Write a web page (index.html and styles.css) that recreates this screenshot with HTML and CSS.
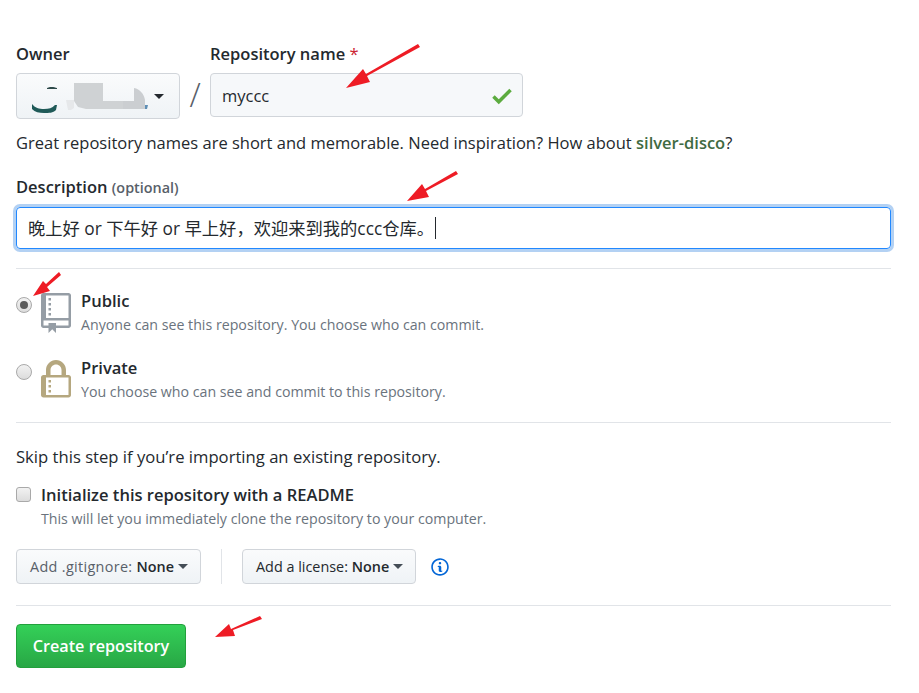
FILE: index.html
```html
<!DOCTYPE html>
<html lang="en">
<head>
<meta charset="utf-8">
<title>Create repository</title>
<link rel="stylesheet" href="styles.css">
</head>
<body>
<main class="page">
  <div class="owner-row">
    <div class="owner-col">
      <div class="label">Owner</div>
      <div class="owner-btn">
        <svg class="blob" width="125" height="36" viewBox="0 0 125 36">
          <path d="M2 24c3 4 7 5 12 5s8-1 11-4h2l-1 5c-3 3-7 3-12 3s-9-1-12-4z" fill="#1f5a58"/>
          <path d="M17 8c2-1.5 7-1.5 10 0v1H17z" fill="#2e4a4a"/>
          <path d="M36 20h8v8l-3 2h-3z" fill="#e6e8ea"/>
          <path d="M44 3h29v18h20v8H56l-8-2-4-6z" fill="#cfd2d4"/>
          <path d="M104 8c6 1 10 6 11 12v9l-4 0h-18v-8h11z" fill="#cbced1"/>
          <path d="M115 25h3l-1 4h-2z" fill="#5f8fb5"/>
        </svg>
        <span class="caret dark"></span>
      </div>
    </div>
    <div class="slash">/</div>
    <div class="repo-col">
      <div class="label">Repository name <span class="req">*</span></div>
      <div class="repo-input">
        <span>myccc</span>
        <svg class="check" width="20" height="26" viewBox="0 0 12 16"><path fill="#5cab3f" d="M12 5l-8 8-4-4 1.5-1.5L4 10l6.5-6.5L12 5z"/></svg>
      </div>
    </div>
  </div>
  <p class="hint">Great repository names are short and memorable. Need inspiration? How about <strong class="suggest">silver-disco</strong>?</p>
  <div class="label desc-label">Description <span class="opt">(optional)</span></div>
  <div class="desc-input">晚上好 or 下午好 or 早上好，欢迎来到我的ccc仓库。<span class="cursor"></span></div>
  <hr class="rule rule-a">
  <div class="choice choice-public">
    <span class="radio on"></span>
    <svg class="big" width="30" height="40" viewBox="0 0 12 16"><path fill="#959da5" d="M4 9H3V8h1v1zm0-3H3v1h1V6zm0-2H3v1h1V4zm0-2H3v1h1V2zm8-1v12c0 .55-.45 1-1 1H6v2l-1.5-1.5L3 16v-2H1c-.55 0-1-.45-1-1V1c0-.55.45-1 1-1h10c.55 0 1 .45 1 1zm-1 10H1v2h2v-1h3v1h5v-2zm0-10H2v9h9V1z"/></svg>
    <div class="choice-text">
      <div class="choice-title">Public</div>
      <div class="note">Anyone can see this repository. You choose who can commit.</div>
    </div>
  </div>
  <div class="choice choice-private">
    <span class="radio"></span>
    <svg class="big" width="30" height="40" viewBox="0 0 12 16"><path fill="#b5a77f" d="M4 13H3v-1h1v1zm8-6v7c0 .55-.45 1-1 1H1c-.55 0-1-.45-1-1V7c0-.55.45-1 1-1h1V4c0-2.2 1.8-4 4-4s4 1.8 4 4v2h1c.55 0 1 .45 1 1zM3.8 6h4.41V4c0-1.22-.98-2.2-2.2-2.2-1.22 0-2.2.98-2.2 2.2v2H3.8zM11 7H2v7h9V7zM4 8H3v1h1V8zm0 2H3v1h1v-1z"/></svg>
    <div class="choice-text">
      <div class="choice-title">Private</div>
      <div class="note">You choose who can see and commit to this repository.</div>
    </div>
  </div>
  <hr class="rule rule-b">
  <p class="skip">Skip this step if you’re importing an existing repository.</p>
  <div class="readme">
    <span class="checkbox"></span>
    <div>
      <div class="choice-title">Initialize this repository with a README</div>
      <div class="note">This will let you immediately clone the repository to your computer.</div>
    </div>
  </div>
  <div class="addons">
    <div class="select-btn muted">Add .gitignore: <b>None</b><span class="caret"></span></div>
    <div class="vsep"></div>
    <div class="select-btn">Add a license: <b>None</b><span class="caret"></span></div>
    <svg class="info" width="18" height="20" viewBox="0 0 14 16"><path fill="#0366d6" d="M6.3 5.69a.942.942 0 0 1-.28-.7c0-.28.09-.52.28-.7.19-.18.42-.28.7-.28.28 0 .52.09.7.28.18.19.28.42.28.7 0 .28-.09.52-.28.7a1 1 0 0 1-.7.3c-.28 0-.52-.11-.7-.3zM8 7.99c-.02-.25-.11-.48-.31-.69-.2-.19-.42-.3-.69-.31H6c-.27.02-.48.13-.69.31-.2.2-.3.44-.31.69h1v3c.02.27.11.5.31.69.2.2.42.31.69.31h1c.27 0 .48-.11.69-.31.2-.19.3-.42.31-.69H8V7.98v.01zM7 2.3c-3.14 0-5.7 2.54-5.7 5.68 0 3.14 2.56 5.7 5.7 5.7s5.7-2.55 5.7-5.7c0-3.15-2.56-5.69-5.7-5.69v.01zM7 .98c3.86 0 7 3.14 7 7s-3.14 7-7 7-7-3.12-7-7 3.14-7 7-7z"/></svg>
  </div>
  <hr class="rule rule-c">
  <div class="create-btn">Create repository</div>
</main>
<svg class="arrows" width="919" height="693" viewBox="0 0 919 693">
  <g fill="#ee1c25">
    <path d="M418 44l2 3-53 29 3 6-24 6 17-19 3 5z"/>
    <path d="M456 171l2 3-32 17 3 6-22 4 15-17 3 5z"/>
    <path d="M59 272l2 3-14 12 3 4-17 5 10-15 3 3z"/>
    <path d="M260 616l2 3-29 11 2 6-20 1 14-13 2 5z"/>
  </g>
</svg>
</body>
</html>
```

FILE: styles.css
```css
* { box-sizing: border-box; }
html, body { margin: 0; padding: 0; background: #fff; }
body {
  width: 919px;
  height: 693px;
  overflow: hidden;
  position: relative;
  font-family: "Open Sans", "Noto Sans CJK SC", sans-serif;
  font-size: 16.5px;
  color: #24292e;
}
.page { padding: 43px 28px 0 16px; }
.owner-row { display: flex; align-items: flex-start; }
.label { font-weight: 600; font-size: 16.5px; line-height: 22px; }
.owner-col { width: 164px; }
.owner-btn {
  position: relative;
  margin-top: 8px;
  height: 46px;
  border: 1px solid #d1d5da;
  border-radius: 4px;
  background: linear-gradient(#fafbfc, #eff3f6);
}
.blob { position: absolute; left: 13px; top: 6px; }
.caret {
  display: inline-block;
  width: 0;
  height: 0;
  margin-left: 4px;
  border-top: 5px solid #444d56;
  border-left: 5px solid transparent;
  border-right: 5px solid transparent;
}
.owner-btn .caret { position: absolute; right: 15px; top: 20px; border-top-color: #24292e; }
.slash { width: 30px; margin-top: 31px; text-align: center; font-size: 33px; line-height: 42px; color: #586069; font-weight: 300; }
.repo-col { width: 313px; }
.req { color: #cb2431; font-weight: 400; }
.repo-input {
  margin-top: 8px;
  height: 44px;
  padding: 1px 10px 0 11px;
  display: flex;
  align-items: center;
  justify-content: space-between;
  border: 1px solid #d1d5da;
  border-radius: 4px;
  background: #f6f8fa;
}
.hint { margin: 13px 0 0; line-height: 22px; }
.suggest { color: #3f6b42; font-weight: 600; }
.desc-label { margin-top: 22px; }
.opt { color: #586069; font-size: 14.4px; }
.desc-input {
  margin-top: 8px;
  height: 42px;
  padding: 0 11px 1px;
  display: flex;
  align-items: center;
  border: 1px solid #2188ff;
  border-radius: 4px;
  box-shadow: 0 0 0 3px rgba(3, 102, 214, 0.3);
  white-space: pre;
  font-size: 17.3px;
}
.cursor { display: inline-block; width: 1px; height: 22px; margin-left: 1px; background: #24292e; }
.rule { border: 0; height: 1px; margin: 0; background: #e1e4e8; }
.rule-a { margin-top: 19px; }
.choice { display: flex; align-items: flex-start; }
.choice-public { margin-top: 24px; }
.choice-private { margin-top: 26px; }
.radio {
  flex: none;
  width: 16px;
  height: 16px;
  margin: 4px 9px 0 0;
  border: 1px solid #a9a9a9;
  border-radius: 50%;
  background: linear-gradient(#f2f2f2, #dcdcdc);
  display: flex;
  align-items: center;
  justify-content: center;
}
.radio.on::after { content: ""; width: 8px; height: 8px; border-radius: 50%; background: #5a5a5a; }
.big { flex: none; }
.choice-text { margin-left: 10px; }
.choice-title { font-weight: 600; font-size: 16.55px; line-height: 20px; margin-top: -2px; }
.note { margin-top: 5px; font-size: 14.2px; line-height: 18px; color: #6a737d; }
.rule-b { margin-top: 21px; }
.skip { margin: 23px 0 0; font-size: 16.65px; line-height: 22px; }
.readme { display: flex; align-items: flex-start; margin-top: 19px; }
.checkbox {
  flex: none;
  width: 15px;
  height: 15px;
  margin: 0 10px 0 0;
  border: 1px solid #a9a9a9;
  border-radius: 3px;
  background: linear-gradient(#f2f2f2, #dcdcdc);
}
.addons { display: flex; align-items: center; margin-top: 21px; }
.select-btn {
  height: 35px;
  padding: 0 12px 0 13px;
  display: flex;
  align-items: center;
  white-space: pre;
  border: 1px solid #d1d5da;
  border-radius: 4px;
  background: linear-gradient(#fafbfc, #eff3f6);
  font-size: 14.4px;
  color: #24292e;
}
.select-btn.muted { color: #586069; letter-spacing: 0.33px; }
.select-btn b { font-weight: 600; color: #24292e; letter-spacing: 0; }
.vsep { width: 1px; height: 35px; margin: 0 20px; background: #e1e4e8; }
.info { margin-left: 15px; }
.rule-c { margin-top: 21px; }
.create-btn {
  margin-top: 18px;
  width: 170px;
  height: 44px;
  display: flex;
  align-items: center;
  justify-content: center;
  border: 1px solid #22a03c;
  border-radius: 4px;
  background: linear-gradient(#34d058, #28a745);
  color: #fff;
  font-weight: 600;
  font-size: 16.2px;
}
.arrows { position: absolute; left: 0; top: 0; pointer-events: none; }
```
